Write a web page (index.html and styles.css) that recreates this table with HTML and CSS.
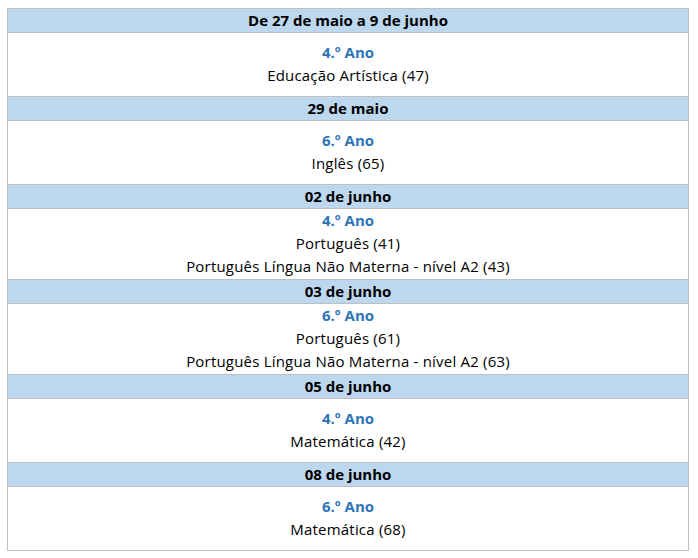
FILE: index.html
```html
<!DOCTYPE html>
<html lang="pt">
<head>
<meta charset="utf-8">
<link rel="stylesheet" href="styles.css">
</head>
<body>
<div class="sched">
  <div class="hd">De 27 de maio a 9 de junho</div>
  <div class="bd"><div class="yr">4.º Ano</div><div>Educação Artística (47)</div></div>
  <div class="hd">29 de maio</div>
  <div class="bd"><div class="yr">6.º Ano</div><div>Inglês (65)</div></div>
  <div class="hd">02 de junho</div>
  <div class="bd three"><div class="yr">4.º Ano</div><div>Português (41)</div><div>Português Língua Não Materna - nível A2 (43)</div></div>
  <div class="hd">03 de junho</div>
  <div class="bd three"><div class="yr">6.º Ano</div><div>Português (61)</div><div>Português Língua Não Materna - nível A2 (63)</div></div>
  <div class="hd">05 de junho</div>
  <div class="bd"><div class="yr">4.º Ano</div><div>Matemática (42)</div></div>
  <div class="hd">08 de junho</div>
  <div class="bd"><div class="yr">6.º Ano</div><div>Matemática (68)</div></div>
</div>
</body>
</html>
```
FILE: styles.css
```css
html, body { margin: 0; padding: 0; background: #fff; }
body { padding: 8px 0 0 7px; font-family: "Open Sans", "Noto Sans", sans-serif; font-size: 15px; color: #000; }
.sched {
  width: 680px;
  border: 1px solid #bfbfbf;
  display: flex;
  flex-direction: column;
}
.hd {
  background: #bdd7ee;
  height: 22px;
  padding-bottom: 1px;
  display: flex;
  align-items: center;
  justify-content: center;
  font-weight: bold;
  border-bottom: 1px solid #bfbfbf;
}
.bd {
  min-height: 61px;
  padding-bottom: 2px;
  display: flex;
  flex-direction: column;
  justify-content: center;
  align-items: center;
  line-height: 23px;
  letter-spacing: 0.2px;
  border-bottom: 1px solid #bfbfbf;
}
.bd.three { padding-bottom: 1px; }
.bd:last-child { border-bottom: none; }
.yr { color: #2e75b6; font-weight: bold; letter-spacing: 0; }
```
